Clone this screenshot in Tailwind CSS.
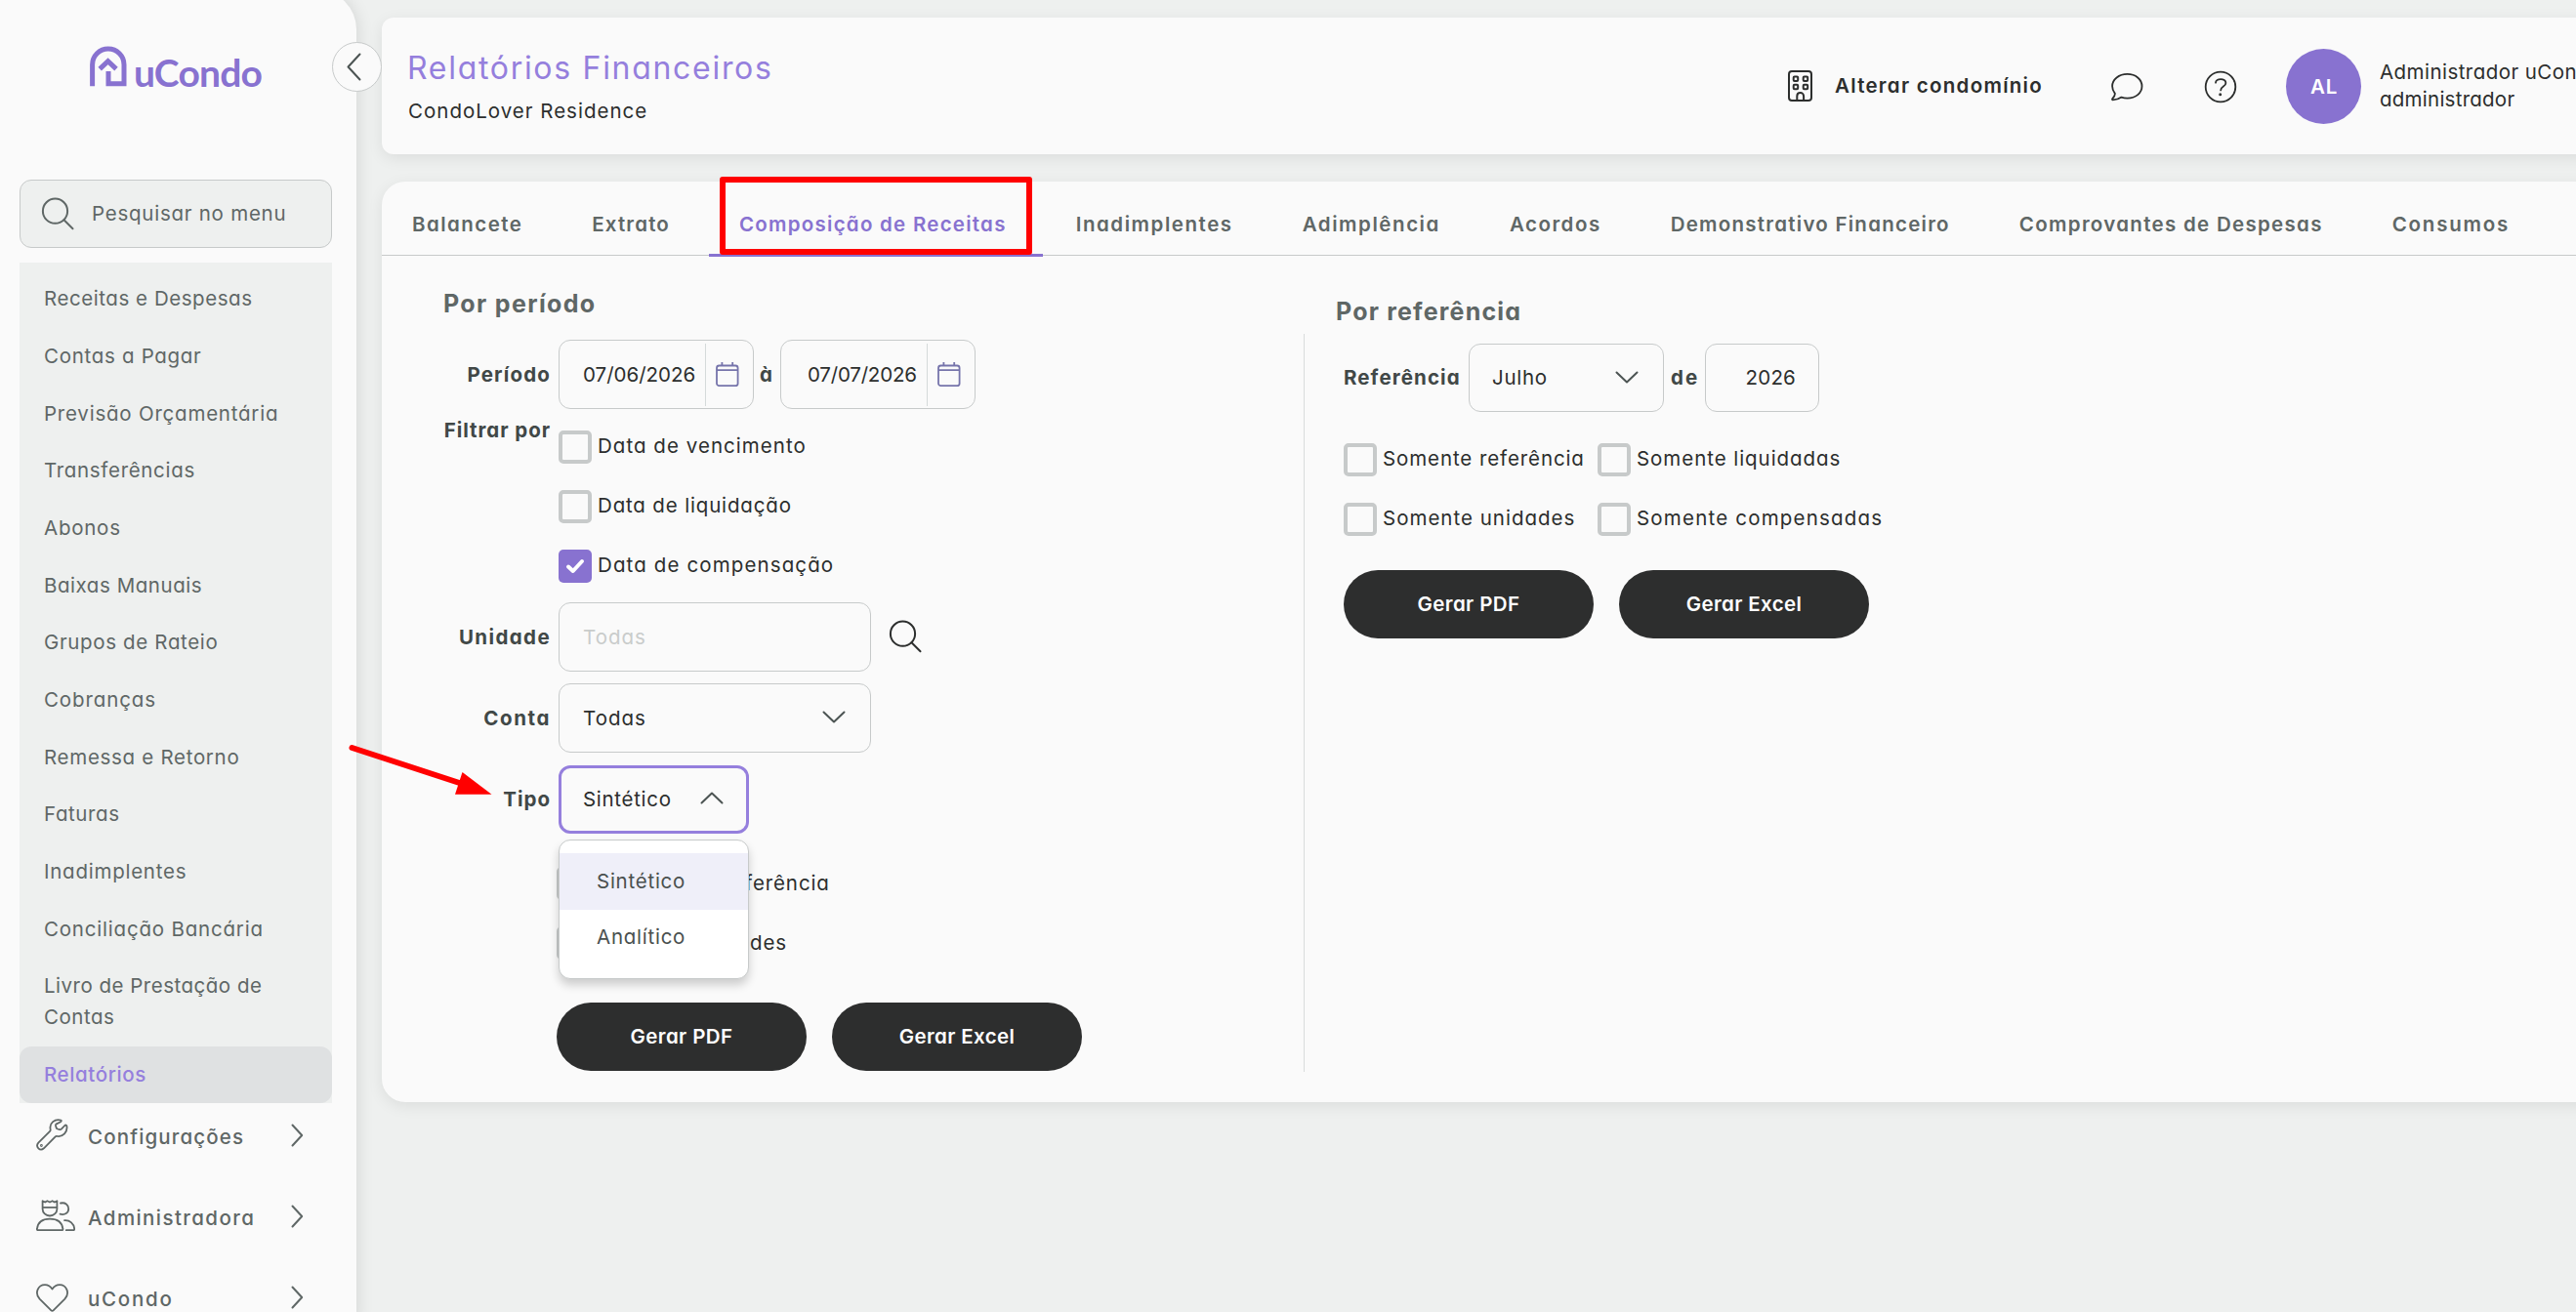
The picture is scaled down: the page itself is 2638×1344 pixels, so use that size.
<!DOCTYPE html>
<html lang="pt-BR">
<head>
<meta charset="utf-8">
<title>Relatórios Financeiros</title>
<script src="https://cdn.jsdelivr.net/npm/@tailwindcss/browser@4"></script>
</head>
<body class="relative flex h-[1344px] w-[2638px] overflow-hidden bg-[#eef0ef] font-['Inter',sans-serif] text-[20.5px] leading-[32px] text-[#2c2e2d] [font-feature-settings:'cv11'] whitespace-nowrap">

<!-- Sidebar -->
<aside class="relative z-10 -mt-[10px] flex h-[1364px] w-[365px] shrink-0 flex-col rounded-tr-[40px] bg-[#fafafa] pt-[10px] pr-[25px] pl-5 text-[#5f6766] shadow-[2px_0_16px_rgba(0,0,0,0.10)]">
  <div class="flex h-[184px] shrink-0 items-start pt-[46px] pl-[71px]">
    <svg class="h-[43px] w-[40px]" viewBox="0 0 40 43" fill="none" stroke="#8872d0" stroke-width="5">
      <path d="M3.6 42.3V20.3a16.2 16.2 0 0 1 32.4 0v19.4H20V27"/>
      <path d="M11.2 24.6 19.6 16.6 28 24.6"/>
    </svg>
    <span class="ml-[6px] font-['Lato'] text-[39px] leading-[44px] font-bold tracking-[-0.8px] text-[#8872d0] pt-[6px]">uCondo</span>
  </div>
  <div class="flex h-[70px] shrink-0 items-center rounded-xl border-[1.5px] border-[#c7caca] bg-[#eef0ef] pl-[21px]">
    <svg class="size-[34px] shrink-0" viewBox="0 0 34 34" fill="none" stroke="currentColor" stroke-width="2" stroke-linecap="round"><circle cx="14.5" cy="14.2" r="12.6"/><path d="m23.5 23.2 9 9"/></svg>
    <span class="ml-[18px] tracking-[0.75px]">Pesquisar no menu</span>
  </div>
  <nav class="mt-[15px] flex h-[861px] shrink-0 flex-col bg-[#eef0ef] pt-[8px]">
    <a class="flex h-[58.67px] items-center pl-[25px] tracking-[0.55px]">Receitas e Despesas</a>
    <a class="flex h-[58.67px] items-center pl-[25px] tracking-[0.7px]">Contas a Pagar</a>
    <a class="flex h-[58.67px] items-center pl-[25px] tracking-[0.78px]">Previsão Orçamentária</a>
    <a class="flex h-[58.67px] items-center pl-[25px] tracking-[0.68px]">Transferências</a>
    <a class="flex h-[58.67px] items-center pl-[25px] tracking-[0.75px]">Abonos</a>
    <a class="flex h-[58.67px] items-center pl-[25px] tracking-[0.55px]">Baixas Manuais</a>
    <a class="flex h-[58.67px] items-center pl-[25px] tracking-[0.65px]">Grupos de Rateio</a>
    <a class="flex h-[58.67px] items-center pl-[25px] tracking-[0.9px]">Cobranças</a>
    <a class="flex h-[58.67px] items-center pl-[25px] tracking-[0.7px]">Remessa e Retorno</a>
    <a class="flex h-[58.67px] items-center pl-[25px] tracking-[0.6px]">Faturas</a>
    <a class="flex h-[58.67px] items-center pl-[25px] tracking-[0.75px]">Inadimplentes</a>
    <a class="flex h-[58.67px] items-center pl-[25px] tracking-[0.8px]">Conciliação Bancária</a>
    <a class="flex h-[91px] items-center pl-[25px] leading-[32.5px] tracking-[0.5px]"><span>Livro de Prestação de<br>Contas</span></a>
    <a class="flex h-[58px] items-center rounded-xl bg-[#dfe1e2] pl-[25px] font-medium tracking-[0.6px] text-[#957fdd]">Relatórios</a>
  </nav>
  <div class="flex h-[83px] shrink-0 items-center pb-[13px] pl-[17px] font-medium">
    <svg class="-mt-[5px] h-[33px] w-[33px]" viewBox="0 0 33 33" fill="none" stroke="currentColor" stroke-width="1.8" stroke-linejoin="round"><path d="M25.4 1.5C19 -.3 13.4 4.7 14.6 10.5c.3 1.2.1 1.700-.5 2.300L2.300 24.600c-3.400 4 1.600 9.200 5.600 5.700L19.700 18.300c.5-.5 1-.6 1.800-.4 5.900 1 10.900-4.300 9.900-10.300-.2-1.300-1.300-1.400-2.100-.6l-3.500 3.700c-.5.500-1 .5-1.600.4l-2.300-.6c-.7-.2-1-.5-1.200-1.100l-.7-2.400c-.1-.6 0-1 .4-1.400l4.600-2.400c.8-.6 1.100-1.400.4-1.700Z"/><circle cx="5.400" cy="27.500" r=".5"/></svg>
    <span class="ml-[20px] w-[208px] tracking-[1.15px]">Configurações</span>
    <svg class="-mt-[5px] h-[24px] w-[13px]" viewBox="0 0 13 24" fill="none" stroke="currentColor" stroke-width="2" stroke-linecap="round" stroke-linejoin="round"><path d="m1.500 1.500 9.700 10.500-9.700 10.500"/></svg>
  </div>
  <div class="flex h-[83px] shrink-0 items-center pb-[13px] pl-[17px] font-medium">
    <svg class="-mt-[5px] h-[33px] w-[40px]" viewBox="0 0 40 33" fill="none" stroke="currentColor" stroke-width="1.800" stroke-linecap="round" stroke-linejoin="round"><path d="M6.600 1.200l2.600 1.300 2.200-1.300 2.600 1.300 2.600-1.300 2.200 1.300 2.600-1.300v8.300a7.400 7 0 0 1-14.800 0ZM6.600 7.900h14.800"/><path d="M2 31.200c-.8 0-1.200-.5-1.100-1.200C1.700 23 6.500 19.600 14 19.600S26.700 23.200 27.400 30c.1.700-.3 1.200-1 1.200Z"/><path d="M25 3.500c4.800-1 8.200 1.500 8.200 5.800s-3.800 6.600-8.700 5.400M29 21.200c5.500-.5 9.800 3.300 10.200 8.800.1.700-.4 1.200-1 1.200h-7.400"/></svg>
    <span class="ml-[13px] w-[208px] tracking-[1.42px]">Administradora</span>
    <svg class="-mt-[5px] h-[24px] w-[13px]" viewBox="0 0 13 24" fill="none" stroke="currentColor" stroke-width="2" stroke-linecap="round" stroke-linejoin="round"><path d="m1.500 1.500 9.700 10.500-9.700 10.500"/></svg>
  </div>
  <div class="flex h-[83px] shrink-0 items-center pb-[13px] pl-[17px] font-medium">
    <svg class="-mt-[3px] h-[29px] w-[33px]" viewBox="0 0 33 29" fill="none" stroke="currentColor" stroke-width="1.800" stroke-linejoin="round"><path d="M15.400 27.300 3.600 15.700C-1.800 9.700 1.800 1.200 9 1.200c3.300 0 5.800 1.700 7.500 4.300C18.200 2.900 20.700 1.200 24 1.200c7.200 0 10.800 8.500 5.400 14.500L17.600 27.300c-.7.700-1.500.7-2.200 0Z"/></svg>
    <span class="ml-[20px] w-[208px] tracking-[1.75px]">uCondo</span>
    <svg class="-mt-[5px] h-[24px] w-[13px]" viewBox="0 0 13 24" fill="none" stroke="currentColor" stroke-width="2" stroke-linecap="round" stroke-linejoin="round"><path d="m1.500 1.500 9.700 10.500-9.700 10.500"/></svg>
  </div>
  <button class="absolute top-[53px] left-[340px] flex size-[51px] items-center justify-center rounded-full border border-[#c7caca] bg-[#fafafa]">
    <svg class="-ml-[7px] h-[29px] w-[15px]" viewBox="0 0 15 29" fill="none" stroke="#4c5453" stroke-width="2" stroke-linecap="round" stroke-linejoin="round"><path d="M13.500 1.500 1.500 14.500l12 13"/></svg>
  </button>
</aside>

<!-- Content -->
<main class="ml-[26px] flex flex-1 flex-col pt-[18px]">
  <header class="flex h-[140px] rounded-l-xl bg-[#fafafa] shadow-[0_4px_16px_rgba(0,0,0,0.08)]">
    <div class="w-[1440px] shrink-0 pt-[32px] pl-[26px]">
      <h1 class="text-[32px] leading-[40px] tracking-[1.7px] text-[#957fdd]">Relatórios Financeiros</h1>
      <p class="mt-[8px] pl-[1px] tracking-[1px]">CondoLover Residence</p>
    </div>
    <div class="flex shrink-0 items-start pt-[32px]">
      <svg class="mt-[21px] h-[34px] w-[26px]" viewBox="0 0 26 34" fill="none" stroke="currentColor" stroke-width="2"><rect x="1" y="2" width="23" height="30" rx="3"/><rect x="5.700" y="7.500" width="4.500" height="4.500" rx="1"/><rect x="15.700" y="7.500" width="4.500" height="4.500" rx="1"/><rect x="5.700" y="15.700" width="4.500" height="4.500" rx="1"/><rect x="15.700" y="15.700" width="4.500" height="4.500" rx="1"/><path d="M9.300 32v-4.500c0-4.600 6.800-4.600 6.800 0V32"/></svg>
      <span class="mt-[22px] ml-[22px] w-[282px] font-semibold tracking-[1.28px]">Alterar condomínio</span>
      <svg class="mt-[23px] h-[32px] w-[34px]" viewBox="0 0 34 32" fill="none" stroke="currentColor" stroke-width="1.800" stroke-linejoin="round"><path d="M17.500 2.900c8.500 0 15 5.300 15 12.400s-6.500 12.300-15 12.300c-2.200 0-4.200-.3-6-1-2.500 1.800-5.300 2.700-8.800 2.700-.7 0-.9-.6-.5-1.100 1.500-1.700 2.700-3.500 2.700-5.300-1.500-1.900-2.800-4.500-2.800-7.600C2.100 8.200 9 2.900 17.500 2.900Z"/></svg>
      <svg class="mt-[22px] ml-[62px] size-[34px]" viewBox="0 0 34 34" fill="none" stroke="currentColor" stroke-width="1.800" stroke-linecap="round"><circle cx="17" cy="17" r="15.300"/><path d="M12 12.700c0-4.700 10.400-5 10.400.2 0 3.800-5.200 3.300-5.200 7.500"/><circle cx="16.700" cy="24.800" r=".6" fill="currentColor"/></svg>
      <div class="ml-[50px] flex size-[77px] items-center justify-center rounded-full bg-[#8872d0] pl-[1px] font-semibold tracking-[0.7px] text-white">AL</div>
      <div class="mt-[10px] ml-[19px] leading-[28px]"><div class="tracking-[0.45px]">Administrador uCondo</div><div class="tracking-[0.25px]">administrador</div></div>
    </div>
  </header>

  <section class="mt-[28px] h-[943px] rounded-l-[24px] bg-[#fafafa] shadow-[0_4px_16px_rgba(0,0,0,0.08)]">
    <div class="flex h-[76px] gap-[3px] border-b border-[#c7caca] font-semibold text-[#5f6766]">
      <a class="flex items-center pt-[12px] pr-[37px] pl-[31px] tracking-[1.45px]">Balancete</a>
      <a class="flex items-center pt-[12px] pr-[37px] pl-[31px] tracking-[1.15px]">Extrato</a>
      <a class="-mb-[2px] flex items-center border-b-[3px] border-[#8872d0] pt-[13px] pr-[37px] pl-[31px] tracking-[1.25px] text-[#8872d0]">Composição de Receitas</a>
      <a class="flex items-center pt-[12px] pr-[37px] pl-[31px] tracking-[1.55px]">Inadimplentes</a>
      <a class="flex items-center pt-[12px] pr-[37px] pl-[31px] tracking-[1.55px]">Adimplência</a>
      <a class="flex items-center pt-[12px] pr-[37px] pl-[31px] tracking-[1.5px]">Acordos</a>
      <a class="flex items-center pt-[12px] pr-[37px] pl-[31px] tracking-[1.25px]">Demonstrativo Financeiro</a>
      <a class="flex items-center pt-[12px] pr-[37px] pl-[31px] tracking-[1.3px]">Comprovantes de Despesas</a>
      <a class="flex items-center pt-[12px] pr-[37px] pl-[31px] tracking-[1.75px]">Consumos</a>
    </div>

    <div class="flex">
      <!-- Por período -->
      <div class="w-[944px] pt-[31px]">
        <h2 class="h-9 pl-[63px] text-[25px] leading-9 font-bold tracking-[1.35px] text-[#5f6766]">Por período</h2>
        <div class="mt-[19px] flex h-[71px] items-center">
          <label class="mr-[8px] w-[173px] text-right font-bold tracking-[1.15px] text-[#414847]">Período</label>
          <div class="flex h-full w-[200px] items-center rounded-xl border-[1.5px] border-[#c7caca]">
            <span class="w-[149px] pl-[24px] tracking-[0px]">07/06/2026</span>
            <span class="h-[64px] w-px bg-[#d5dada]"></span>
            <svg class="ml-[10px] h-[27px] w-[24px]" viewBox="0 0 24 27" fill="none" stroke="#7674ab" stroke-width="1.800"><rect x="1" y="4.500" width="21.600" height="20.700" rx="2.500"/><path d="M1 9.200h21.600M6.400 1v3.500M17.200 1v3.500"/></svg>
          </div>
          <span class="w-[27px] pl-[6px] font-bold text-[#414847]">à</span>
          <div class="flex h-full w-[200px] items-center rounded-xl border-[1.5px] border-[#c7caca]">
            <span class="w-[149px] pl-[27px] tracking-[-0.2px]">07/07/2026</span>
            <span class="h-[64px] w-px bg-[#d5dada]"></span>
            <svg class="ml-[10px] h-[27px] w-[24px]" viewBox="0 0 24 27" fill="none" stroke="#7674ab" stroke-width="1.800"><rect x="1" y="4.500" width="21.600" height="20.700" rx="2.500"/><path d="M1 9.200h21.600M6.400 1v3.500M17.200 1v3.500"/></svg>
          </div>
        </div>
        <div class="mt-2 flex">
          <label class="mr-[8px] w-[173px] text-right leading-[28px] font-bold tracking-[0.95px] text-[#414847]">Filtrar por</label>
          <div>
            <div class="flex h-[61px] items-center"><span class="mr-[6px] size-[34px] rounded-[5px] border-4 border-[#c7caca]"></span><span class="pb-[2px] tracking-[1.04px]">Data de vencimento</span></div>
            <div class="flex h-[61px] items-center"><span class="mr-[6px] size-[34px] rounded-[5px] border-4 border-[#c7caca]"></span><span class="pb-[2px] tracking-[0.84px]">Data de liquidação</span></div>
            <div class="flex h-[61px] items-center">
              <span class="mr-[6px] flex size-[34px] items-center justify-center rounded-[5px] bg-[#8872d0]"><svg class="h-[16px] w-[20px]" viewBox="0 0 20 16" fill="none" stroke="#fff" stroke-width="4" stroke-linecap="round" stroke-linejoin="round"><path d="m3 8.500 4.800 4.500 9.200-10"/></svg></span>
              <span class="pb-[2px] tracking-[1.12px]">Data de compensação</span>
            </div>
          </div>
        </div>
        <div class="mt-[7px] flex h-[71px] items-center">
          <label class="mr-[8px] w-[173px] text-right font-bold tracking-[1.4px] text-[#414847]">Unidade</label>
          <div class="flex h-full w-[320px] items-center rounded-xl border-[1.5px] border-[#c7caca] pl-[24px] tracking-[1px] text-[#c9cccb]">Todas</div>
          <svg class="-mt-[2px] ml-[18px] size-[34px]" viewBox="0 0 34 34" fill="none" stroke="currentColor" stroke-width="2" stroke-linecap="round"><circle cx="14.500" cy="14.200" r="12.600"/><path d="m23.500 23.200 9 9"/></svg>
        </div>
        <div class="mt-3 flex h-[71px] items-center">
          <label class="mr-[8px] w-[173px] text-right font-bold tracking-[1.6px] text-[#414847]">Conta</label>
          <div class="flex h-full w-[320px] items-center justify-between rounded-xl border-[1.5px] border-[#c7caca] pr-[25px] pl-[24px] tracking-[1px]">Todas
            <svg class="-mt-[2px] h-[13px] w-[24px]" viewBox="0 0 24 13" fill="none" stroke="#4c5453" stroke-width="2" stroke-linecap="round" stroke-linejoin="round"><path d="m1.500 1.500 10.500 10 10.500-10"/></svg>
          </div>
        </div>
        <div class="relative mt-[13px] flex h-[70px] items-center">
          <label class="mr-[8px] w-[173px] text-right font-bold tracking-[1px] text-[#414847]">Tipo</label>
          <div class="flex h-full w-[195px] items-center justify-between rounded-xl border-[3px] border-[#957fdd] pr-[23px] pl-[22px] tracking-[0.7px]">Sintético
            <svg class="-mt-[4px] h-[13px] w-[24px]" viewBox="0 0 24 13" fill="none" stroke="#4c5453" stroke-width="2" stroke-linecap="round" stroke-linejoin="round"><path d="m1.500 11.500 10.500-10 10.500 10"/></svg>
          </div>
          <div class="absolute top-[76px] left-[181px] z-10 h-[143px] w-[195px] rounded-xl border border-[#c7caca] bg-white pt-[13px] tracking-[0.75px] text-[#4a504f] shadow-[0_6px_10px_rgba(0,0,0,0.18)]">
            <div class="flex h-[58px] items-center bg-[#efeff9] pl-[38px]">Sintético</div>
            <div class="flex h-[56px] items-center pl-[38px]">Analítico</div>
          </div>
        </div>
        <div class="mt-[20px] ml-[179px] w-[280px]">
          <div class="flex h-[61px] items-center"><span class="size-[34px] rounded-[5px] border-4 border-[#c7caca]"></span><span class="ml-[159px] tracking-[0.9px]">ferência</span></div>
          <div class="flex h-[61px] items-center"><span class="size-[34px] rounded-[5px] border-4 border-[#c7caca]"></span><span class="ml-[164px] tracking-[0.9px]">des</span></div>
        </div>
        <div class="mt-[31px] ml-[179px] flex gap-[26px] font-semibold tracking-[0.4px] text-white">
          <button class="h-[70px] w-[256px] rounded-full bg-[#2d2e2e]">Gerar PDF</button>
          <button class="h-[70px] w-[256px] rounded-full bg-[#2d2e2e]">Gerar Excel</button>
        </div>
      </div>
      <div class="mt-[80px] h-[756px] w-px bg-[#d9dcdc]"></div>

      <!-- Por referência -->
      <div class="pt-[39px] pl-[32px]">
        <h2 class="h-9 text-[25px] leading-9 font-bold tracking-[1.2px] text-[#5f6766]">Por referência</h2>
        <div class="mt-[15px] ml-[8px] flex h-[70px] items-center">
          <label class="w-[128px] font-bold tracking-[1.1px] text-[#414847]">Referência</label>
          <div class="flex h-full w-[200px] items-center justify-between rounded-xl border-[1.5px] border-[#c7caca] pr-[25px] pl-[23px] tracking-[0.7px]">Julho
            <svg class="-mt-[2px] h-[13px] w-[24px]" viewBox="0 0 24 13" fill="none" stroke="#4c5453" stroke-width="2" stroke-linecap="round" stroke-linejoin="round"><path d="m1.500 1.500 10.500 10 10.500-10"/></svg>
          </div>
          <span class="w-[42px] pl-[7px] font-bold tracking-[2px] text-[#414847]">de</span>
          <div class="flex h-full w-[117px] items-center justify-end rounded-xl border-[1.5px] border-[#c7caca] pr-[23px] tracking-[0.2px]">2026</div>
        </div>
        <div class="mt-[18px] ml-[8px] grid grid-cols-[260px_300px]">
          <div class="flex h-[61px] items-center"><span class="mr-[6px] size-[34px] rounded-[5px] border-4 border-[#c7caca]"></span><span class="pb-[2px] tracking-[0.9px]">Somente referência</span></div>
          <div class="flex h-[61px] items-center"><span class="mr-[6px] size-[34px] rounded-[5px] border-4 border-[#c7caca]"></span><span class="pb-[2px] tracking-[0.95px]">Somente liquidadas</span></div>
          <div class="flex h-[61px] items-center"><span class="mr-[6px] size-[34px] rounded-[5px] border-4 border-[#c7caca]"></span><span class="pb-[2px] tracking-[1px]">Somente unidades</span></div>
          <div class="flex h-[61px] items-center"><span class="mr-[6px] size-[34px] rounded-[5px] border-4 border-[#c7caca]"></span><span class="pb-[2px] tracking-[1.2px]">Somente compensadas</span></div>
        </div>
        <div class="mt-[22px] ml-[8px] flex gap-[26px] font-semibold tracking-[0.4px] text-white">
          <button class="h-[70px] w-[256px] rounded-full bg-[#2d2e2e]">Gerar PDF</button>
          <button class="h-[70px] w-[256px] rounded-full bg-[#2d2e2e]">Gerar Excel</button>
        </div>
      </div>
    </div>
  </section>
</main>

<!-- Annotations -->
<div class="absolute top-[181px] left-[737px] z-20 h-[80px] w-[320px] rounded-[3px] border-[6px] border-[#ff0000]"></div>
<svg class="absolute top-[755px] left-[350px] z-20 h-[70px] w-[160px]" viewBox="350 755 160 70"><path d="M360.500 766 472 802.500" stroke="#f00" stroke-width="6" stroke-linecap="round"/><path d="m473.500 791 30 22.700h-37.500Z" fill="#f00"/></svg>
</body>
</html>
